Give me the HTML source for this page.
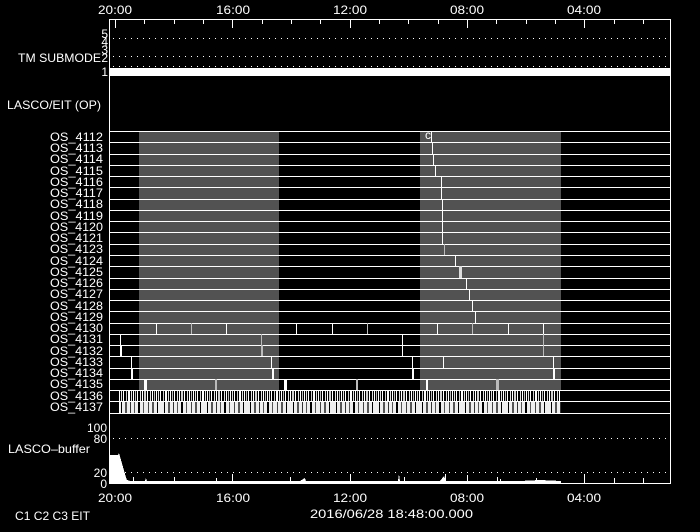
<!DOCTYPE html>
<html><head><meta charset="utf-8"><style>
html,body{margin:0;padding:0;background:#000;}
svg{display:block}
text{font-family:"Liberation Sans",sans-serif;font-size:12px;fill:#fff}
</style></head><body>
<svg width="700" height="532" viewBox="0 0 700 532" xmlns="http://www.w3.org/2000/svg" shape-rendering="crispEdges">
<defs>
<pattern id="dots" x="113" y="0" width="6" height="2" patternUnits="userSpaceOnUse"><rect x="0" y="0" width="1" height="1" fill="#fff"/></pattern>
<pattern id="bc1" x="119" y="0" width="37" height="11" patternUnits="userSpaceOnUse">
<rect width="37" height="11" fill="#000"/>
<rect x="0" width="1" height="11" fill="#fff"/><rect x="2" width="1" height="11" fill="#ddd"/><rect x="4" width="1" height="11" fill="#fff"/>
<rect x="7" width="1" height="11" fill="#ccc"/><rect x="9" width="2" height="11" fill="#fff"/><rect x="12" width="1" height="11" fill="#ddd"/>
<rect x="14" width="1" height="11" fill="#fff"/><rect x="16" width="1" height="11" fill="#bbb"/><rect x="18" width="1" height="11" fill="#fff"/>
<rect x="21" width="1" height="11" fill="#ddd"/><rect x="23" width="1" height="11" fill="#fff"/><rect x="25" width="2" height="11" fill="#ccc"/>
<rect x="28" width="1" height="11" fill="#fff"/><rect x="31" width="1" height="11" fill="#ddd"/><rect x="33" width="1" height="11" fill="#fff"/><rect x="35" width="1" height="11" fill="#bbb"/>
</pattern>
<pattern id="bc2" x="119" y="0" width="43" height="11" patternUnits="userSpaceOnUse">
<rect width="43" height="11" fill="#eee"/>
<rect x="2" width="1" height="11" fill="#000"/><rect x="6" width="2" height="11" fill="#555"/><rect x="11" width="1" height="11" fill="#333"/>
<rect x="15" width="1" height="11" fill="#555"/><rect x="19" width="2" height="11" fill="#000"/><rect x="24" width="1" height="11" fill="#555"/>
<rect x="29" width="1" height="11" fill="#444"/><rect x="33" width="2" height="11" fill="#555"/><rect x="38" width="1" height="11" fill="#000"/>
</pattern>
</defs>

<rect x="109.5" y="19.5" width="561" height="464" fill="none" stroke="#fff"/>

<g stroke="#fff">
<line x1="115.5" y1="19" x2="115.5" y2="28"/><line x1="144.5" y1="19" x2="144.5" y2="24"/><line x1="174.5" y1="19" x2="174.5" y2="24"/><line x1="203.5" y1="19" x2="203.5" y2="24"/>
<line x1="232.5" y1="19" x2="232.5" y2="28"/><line x1="262.5" y1="19" x2="262.5" y2="24"/><line x1="291.5" y1="19" x2="291.5" y2="24"/><line x1="320.5" y1="19" x2="320.5" y2="24"/>
<line x1="350.5" y1="19" x2="350.5" y2="28"/><line x1="379.5" y1="19" x2="379.5" y2="24"/><line x1="408.5" y1="19" x2="408.5" y2="24"/><line x1="438.5" y1="19" x2="438.5" y2="24"/>
<line x1="467.5" y1="19" x2="467.5" y2="28"/><line x1="496.5" y1="19" x2="496.5" y2="24"/><line x1="526.5" y1="19" x2="526.5" y2="24"/><line x1="555.5" y1="19" x2="555.5" y2="24"/>
<line x1="584.5" y1="19" x2="584.5" y2="28"/><line x1="614.5" y1="19" x2="614.5" y2="24"/><line x1="643.5" y1="19" x2="643.5" y2="24"/>
<line x1="584.5" y1="483" x2="584.5" y2="474"/><line x1="614.5" y1="483" x2="614.5" y2="478"/><line x1="643.5" y1="483" x2="643.5" y2="478"/>
</g>
<g>
<text x="98" y="14" textLength="34" lengthAdjust="spacingAndGlyphs">20:00</text><text x="216" y="14" textLength="34" lengthAdjust="spacingAndGlyphs">16:00</text><text x="333" y="14" textLength="34" lengthAdjust="spacingAndGlyphs">12:00</text><text x="450" y="14" textLength="34" lengthAdjust="spacingAndGlyphs">08:00</text><text x="567" y="14" textLength="34" lengthAdjust="spacingAndGlyphs">04:00</text>
<text x="98" y="502" textLength="34" lengthAdjust="spacingAndGlyphs">20:00</text><text x="216" y="502" textLength="34" lengthAdjust="spacingAndGlyphs">16:00</text><text x="333" y="502" textLength="34" lengthAdjust="spacingAndGlyphs">12:00</text><text x="450" y="502" textLength="34" lengthAdjust="spacingAndGlyphs">08:00</text><text x="567" y="502" textLength="34" lengthAdjust="spacingAndGlyphs">04:00</text>
<text x="310" y="518" textLength="163" lengthAdjust="spacingAndGlyphs">2016/06/28 18:48:00.000</text>
</g>
<text x="15" y="520" font-size="10" textLength="75" lengthAdjust="spacingAndGlyphs">C1  C2  C3  EIT</text>

<rect x="113" y="38" width="556" height="1" fill="url(#dots)"/>
<rect x="113" y="47" width="556" height="1" fill="url(#dots)"/>
<rect x="113" y="56" width="556" height="1" fill="url(#dots)"/>
<rect x="113" y="66" width="556" height="1" fill="url(#dots)"/>
<rect x="110" y="68" width="560" height="8" fill="#fff"/>
<text x="18" y="62" textLength="83" lengthAdjust="spacingAndGlyphs">TM SUBMODE</text>
<g text-anchor="end"><text x="108" y="38" font-size="11">5</text><text x="108" y="46" font-size="11">4</text><text x="108" y="54" font-size="11">3</text><text x="108" y="62" font-size="11">2</text><text x="108" y="76" font-size="11">1</text></g>
<text x="7" y="109" textLength="94" lengthAdjust="spacingAndGlyphs">LASCO/EIT (OP)</text>

<rect x="139" y="131" width="140" height="282" fill="#525252"/>
<rect x="420" y="131" width="141" height="282" fill="#525252"/>

<rect x="119" y="391" width="442" height="11" fill="url(#bc1)"/>
<rect x="119" y="402" width="442" height="11" fill="url(#bc2)"/>

<g fill="#fff">
<rect x="110" y="131" width="560" height="1"/><rect x="110" y="142" width="560" height="1"/><rect x="110" y="154" width="560" height="1"/><rect x="110" y="165" width="560" height="1"/>
<rect x="110" y="176" width="560" height="1"/><rect x="110" y="187" width="560" height="1"/><rect x="110" y="199" width="560" height="1"/><rect x="110" y="210" width="560" height="1"/>
<rect x="110" y="221" width="560" height="1"/><rect x="110" y="232" width="560" height="1"/><rect x="110" y="244" width="560" height="1"/><rect x="110" y="255" width="560" height="1"/>
<rect x="110" y="266" width="560" height="1"/><rect x="110" y="278" width="560" height="1"/><rect x="110" y="289" width="560" height="1"/><rect x="110" y="300" width="560" height="1"/>
<rect x="110" y="311" width="560" height="1"/><rect x="110" y="323" width="560" height="1"/><rect x="110" y="334" width="560" height="1"/><rect x="110" y="345" width="560" height="1"/>
<rect x="110" y="356" width="560" height="1"/><rect x="110" y="368" width="560" height="1"/><rect x="110" y="379" width="560" height="1"/><rect x="110" y="390" width="560" height="1"/>
<rect x="110" y="401" width="560" height="1"/><rect x="110" y="413" width="560" height="1"/>
</g>
<g fill="#fff">
<rect x="431" y="131" width="1" height="11"/><rect x="432" y="142" width="1" height="12"/><rect x="433" y="154" width="1" height="11"/><rect x="435" y="165" width="1" height="11"/>
<rect x="441" y="176" width="1" height="11"/><rect x="441" y="187" width="1" height="12"/><rect x="442" y="199" width="1" height="11"/><rect x="442" y="210" width="1" height="11"/>
<rect x="442" y="221" width="1" height="11"/><rect x="442" y="232" width="1" height="12"/><rect x="444" y="244" width="1" height="11" fill="#bbb"/><rect x="455" y="255" width="1" height="11"/>
<rect x="459" y="266" width="3" height="12" fill="#ddd"/><rect x="466" y="278" width="1" height="11"/><rect x="469" y="289" width="1" height="11"/><rect x="472" y="300" width="1" height="11"/>
<rect x="475" y="311" width="1" height="12"/>
</g>
<text x="425" y="139" font-size="8">c</text>
<g fill="#fff">
<rect x="156" y="323" width="1" height="11"/><rect x="191" y="323" width="1" height="11" fill="#bbb"/><rect x="226" y="323" width="1" height="11"/>
<rect x="296" y="323" width="1" height="11"/><rect x="332" y="323" width="1" height="11"/><rect x="367" y="323" width="1" height="11" fill="#bbb"/>
<rect x="437" y="323" width="1" height="11"/><rect x="472" y="323" width="1" height="11" fill="#bbb"/><rect x="508" y="323" width="1" height="11"/><rect x="543" y="323" width="1" height="11"/>
<rect x="120" y="334" width="1" height="11"/><rect x="261" y="334" width="1" height="11" fill="#bbb"/><rect x="402" y="334" width="1" height="11"/><rect x="543" y="334" width="1" height="11" fill="#bbb"/>
<rect x="120" y="345" width="2" height="11"/><rect x="261" y="345" width="2" height="11" fill="#bbb"/><rect x="402" y="345" width="1" height="11"/><rect x="543" y="345" width="1" height="11" fill="#bbb"/>
<rect x="131" y="356" width="1" height="12"/><rect x="271" y="356" width="1" height="12"/><rect x="412" y="356" width="1" height="12"/><rect x="443" y="356" width="1" height="12"/><rect x="553" y="356" width="1" height="12"/>
<rect x="131" y="368" width="2" height="11"/><rect x="272" y="368" width="2" height="11"/><rect x="412" y="368" width="2" height="11"/><rect x="553" y="368" width="2" height="11"/>
<rect x="144" y="379" width="3" height="11"/><rect x="215" y="379" width="2" height="11" fill="#bbb"/><rect x="284" y="379" width="3" height="11"/>
<rect x="356" y="379" width="2" height="11" fill="#bbb"/><rect x="426" y="379" width="2" height="11"/><rect x="496" y="379" width="3" height="11" fill="#bbb"/>
<rect x="119" y="391" width="1" height="22"/>
</g>

<g>
<text x="50" y="141" textLength="53" lengthAdjust="spacingAndGlyphs">OS_4112</text>
<text x="50" y="152" textLength="53" lengthAdjust="spacingAndGlyphs">OS_4113</text>
<text x="50" y="163" textLength="53" lengthAdjust="spacingAndGlyphs">OS_4114</text>
<text x="50" y="175" textLength="53" lengthAdjust="spacingAndGlyphs">OS_4115</text>
<text x="50" y="186" textLength="53" lengthAdjust="spacingAndGlyphs">OS_4116</text>
<text x="50" y="197" textLength="53" lengthAdjust="spacingAndGlyphs">OS_4117</text>
<text x="50" y="208" textLength="53" lengthAdjust="spacingAndGlyphs">OS_4118</text>
<text x="50" y="220" textLength="53" lengthAdjust="spacingAndGlyphs">OS_4119</text>
<text x="50" y="231" textLength="53" lengthAdjust="spacingAndGlyphs">OS_4120</text>
<text x="50" y="242" textLength="53" lengthAdjust="spacingAndGlyphs">OS_4121</text>
<text x="50" y="253" textLength="53" lengthAdjust="spacingAndGlyphs">OS_4123</text>
<text x="50" y="265" textLength="53" lengthAdjust="spacingAndGlyphs">OS_4124</text>
<text x="50" y="276" textLength="53" lengthAdjust="spacingAndGlyphs">OS_4125</text>
<text x="50" y="287" textLength="53" lengthAdjust="spacingAndGlyphs">OS_4126</text>
<text x="50" y="298" textLength="53" lengthAdjust="spacingAndGlyphs">OS_4127</text>
<text x="50" y="310" textLength="53" lengthAdjust="spacingAndGlyphs">OS_4128</text>
<text x="50" y="321" textLength="53" lengthAdjust="spacingAndGlyphs">OS_4129</text>
<text x="50" y="332" textLength="53" lengthAdjust="spacingAndGlyphs">OS_4130</text>
<text x="50" y="343" textLength="53" lengthAdjust="spacingAndGlyphs">OS_4131</text>
<text x="50" y="355" textLength="53" lengthAdjust="spacingAndGlyphs">OS_4132</text>
<text x="50" y="366" textLength="53" lengthAdjust="spacingAndGlyphs">OS_4133</text>
<text x="50" y="377" textLength="53" lengthAdjust="spacingAndGlyphs">OS_4134</text>
<text x="50" y="388" textLength="53" lengthAdjust="spacingAndGlyphs">OS_4135</text>
<text x="50" y="400" textLength="53" lengthAdjust="spacingAndGlyphs">OS_4136</text>
<text x="50" y="411" textLength="53" lengthAdjust="spacingAndGlyphs">OS_4137</text>
</g>

<rect x="113" y="427" width="556" height="1" fill="url(#dots)"/>
<rect x="113" y="438" width="556" height="1" fill="url(#dots)"/>
<rect x="113" y="472" width="556" height="1" fill="url(#dots)"/>
<g text-anchor="end"><text x="107" y="432">100</text><text x="107" y="443">80</text><text x="107" y="477">20</text><text x="107" y="488">0</text></g>
<text x="8" y="453" textLength="82" lengthAdjust="spacingAndGlyphs">LASCO–buffer</text>
<polygon fill="#fff" points="110,483 110,455 118,455 119,453 121,460 123,467 125,474 127,480 130,481 145,481 146,478 147,481 200,481 250,481 300,481 305,478 306,481 350,481 360,481 398,481 399,474 400,481 440,481 444,476 446,481 480,481 500,481 520,481 540,480 561,481 561,483"/>
<g stroke="#fff">
<line x1="133.5" y1="483" x2="133.5" y2="477"/><line x1="174.5" y1="483" x2="174.5" y2="477"/><line x1="216.5" y1="483" x2="216.5" y2="478"/>
<line x1="232.5" y1="483" x2="232.5" y2="474"/><line x1="290.5" y1="483" x2="290.5" y2="477"/><line x1="350.5" y1="483" x2="350.5" y2="474"/>
<line x1="404.5" y1="483" x2="404.5" y2="477"/><line x1="445.5" y1="483" x2="445.5" y2="474"/><line x1="467.5" y1="483" x2="467.5" y2="475"/>
<line x1="497.5" y1="483" x2="497.5" y2="477"/><line x1="500.5" y1="483" x2="500.5" y2="479"/><line x1="536.5" y1="483" x2="536.5" y2="478"/>
</g>
</svg>
</body></html>
